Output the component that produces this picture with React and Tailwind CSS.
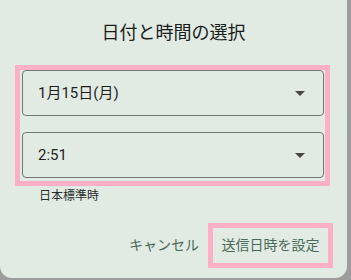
export default function App() {
  const font = { fontFamily: '"Roboto", "Noto Sans CJK JP", sans-serif' };
  const Caret = () => (
    <svg width="10" height="5" viewBox="0 0 10 5" className="mr-[18px]">
      <path d="M0 0h10L5 5z" fill="#444746" />
    </svg>
  );

  return (
    <div className="w-[351px] h-[280px] bg-[#9c9c9c] overflow-hidden" style={font}>
      <div className="w-[347px] h-[278px] bg-[#e1ebe3] rounded-b-[12px] flex flex-col">
        <h1 className="pt-[21px] text-center text-[18px] leading-[24px] text-[#1b1d1c] font-normal">
          日付と時間の選択
        </h1>

        <div className="mt-[20px] ml-[15px] w-[315px] border-[5px] border-[#fdafc8] pl-[2px] pr-[1px] pb-[3px] flex flex-col gap-[16px]">
          <div className="h-[46px] border border-[#747775] rounded-[4px] flex items-center justify-between">
            <span className="ml-[15px] text-[15px] text-[#1f1f1f]">1月15日(月)</span>
            <Caret />
          </div>
          <div className="h-[46px] border border-[#747775] rounded-[4px] flex items-center justify-between">
            <span className="ml-[15px] text-[15px] text-[#1f1f1f]">2:51</span>
            <Caret />
          </div>
        </div>

        <p className="mt-[2px] ml-[39px] text-[12px] leading-[16px] text-[#2a2c2b]">日本標準時</p>

        <div className="mt-[19px] flex items-center justify-end pr-[14px]">
          <span className="text-[14px] text-[#4a6a58] mr-[9px]">キャンセル</span>
          <div className="w-[125px] h-[45px] border-[5px] border-[#fdafc8] flex items-center justify-center">
            <span className="text-[14px] text-[#4a6a58]">送信日時を設定</span>
          </div>
        </div>
      </div>
    </div>
  );
}
